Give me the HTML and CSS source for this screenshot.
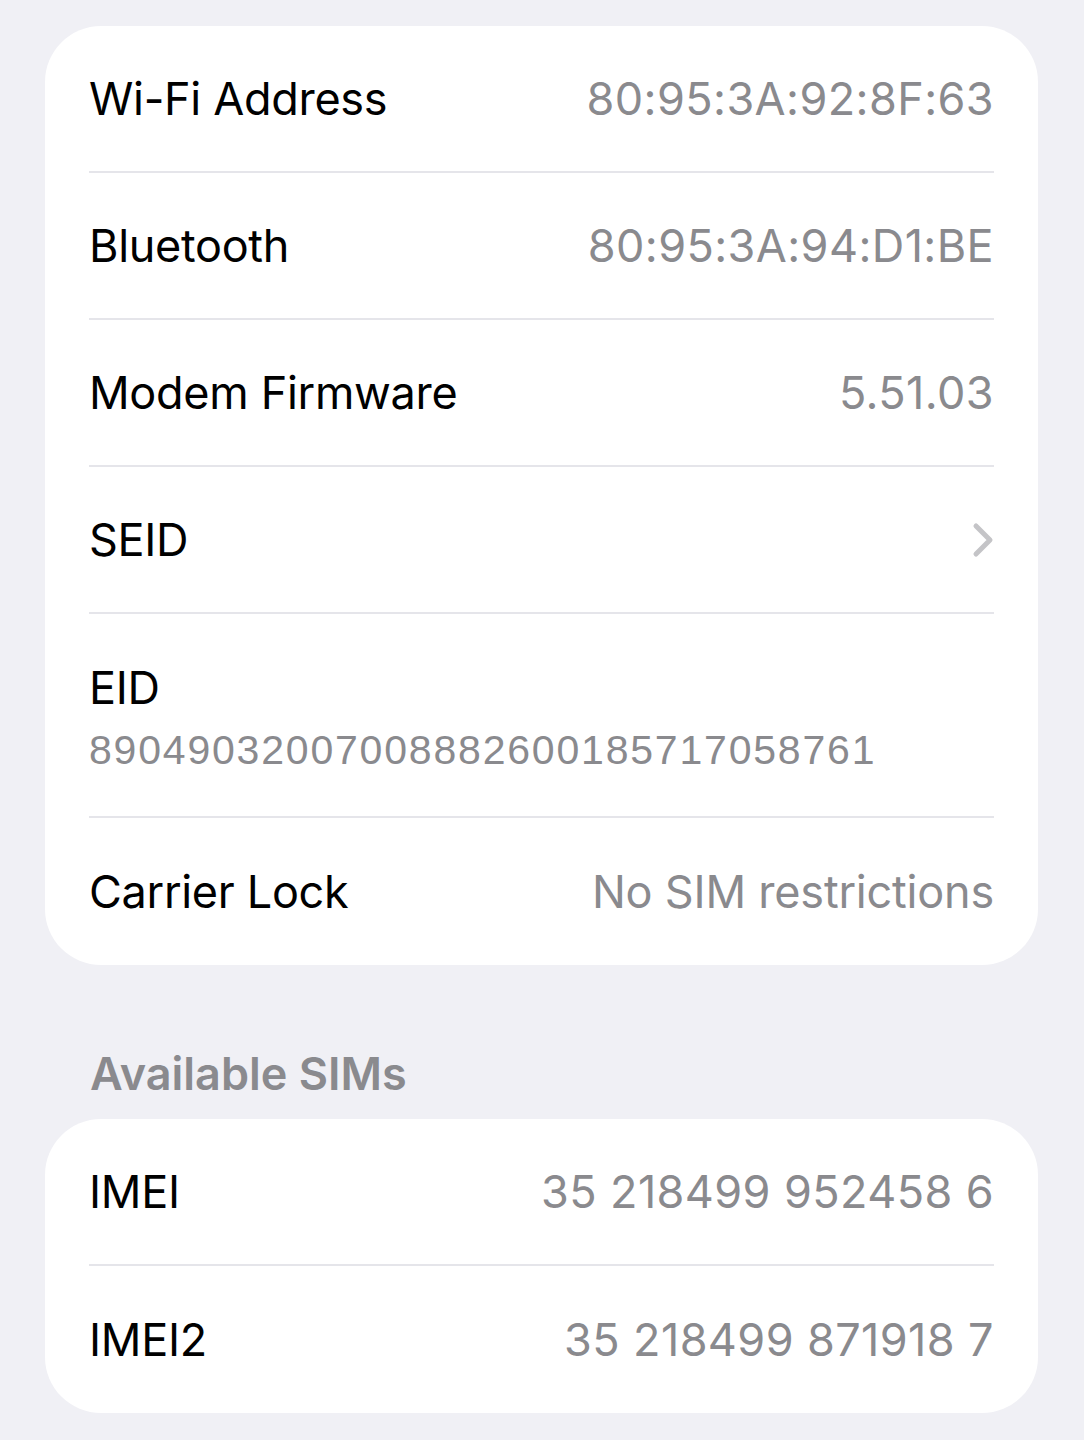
FILE: index.html
```html
<!DOCTYPE html>
<html lang="en">
<head>
    <meta charset="UTF-8">
    <meta name="viewport" content="width=device-width, initial-scale=1.0">
    <title>About</title>
    <link rel="stylesheet" href="styles.css">
</head>
<body>
    <div class="page">
        <div class="group">
            <div class="row">
                <span class="label">Wi-Fi Address</span>
                <span class="value num">80:95:3A:92:8F:63</span>
            </div>
            <div class="row">
                <span class="label">Bluetooth</span>
                <span class="value num">80:95:3A:94:D1:BE</span>
            </div>
            <div class="row">
                <span class="label">Modem Firmware</span>
                <span class="value num">5.51.03</span>
            </div>
            <div class="row">
                <span class="label">SEID</span>
                <svg class="chevron" width="22" height="36" viewBox="0 0 22 36">
                    <path d="M4 4 L18 18 L4 32" fill="none" stroke="#c4c4c7" stroke-width="5" stroke-linecap="round" stroke-linejoin="round"/>
                </svg>
            </div>
            <div class="row row-stacked">
                <span class="label">EID</span>
                <span class="subvalue">89049032007008882600185717058761</span>
            </div>
            <div class="row">
                <span class="label">Carrier Lock</span>
                <span class="value">No SIM restrictions</span>
            </div>
        </div>

        <div class="section-header">Available SIMs</div>

        <div class="group">
            <div class="row">
                <span class="label">IMEI</span>
                <span class="value num">35 218499 952458 6</span>
            </div>
            <div class="row">
                <span class="label">IMEI2</span>
                <span class="value num">35 218499 871918 7</span>
            </div>
        </div>
    </div>
</body>
</html>
```

FILE: styles.css
```css
body {
    margin: 0;
    background-color: #f0f0f5;
    font-family: Inter, 'Liberation Sans', Arial, sans-serif;
    -webkit-font-smoothing: antialiased;
}

.page {
    padding: 26px 46px 26px 45px;
}

.group {
    background: #ffffff;
    border-radius: 56px;
    padding: 0 44px 0 44px;
}

.row {
    display: flex;
    justify-content: space-between;
    align-items: center;
    height: 145px;
    border-bottom: 2px solid #e5e5ea;
}

.row:last-child {
    border-bottom: none;
    height: 147px;
}

.row-stacked {
    flex-direction: column;
    align-items: flex-start;
    justify-content: center;
    height: 204px;
    gap: 12px;
    padding-top: 4px;
    box-sizing: border-box;
}

.label {
    font-size: 45px;
    color: #000;
    letter-spacing: -0.3px;
}

.value {
    font-size: 45px;
    color: #8a8a8e;
    letter-spacing: -0.2px;
}

.value.num {
    letter-spacing: 0.4px;
}

.subvalue {
    font-size: 41px;
    color: #8a8a8e;
    font-family: 'Liberation Sans', Arial, sans-serif;
    letter-spacing: 1.8px;
}

.chevron {
    margin-right: 0;
}

.section-header {
    font-size: 45px;
    font-weight: 600;
    color: #8a8a8e;
    padding: 82px 0 18px 45px;
    line-height: 1.2;
}
```
